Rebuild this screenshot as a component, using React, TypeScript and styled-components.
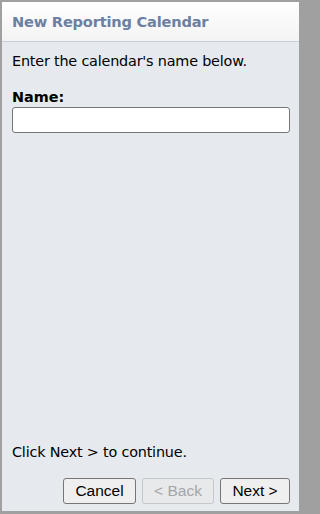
import React from 'react'
import styled, { createGlobalStyle } from 'styled-components'

const GlobalStyle = createGlobalStyle`
  html, body {
    margin: 0;
    padding: 0;
    background: #a0a0a0;
  }
  * {
    box-sizing: border-box;
  }
`

const StyledDialog = styled.div`
  width: 302px;
  height: 514px;
  display: flex;
  flex-direction: column;
  border-style: solid;
  border-color: #a0a0a0;
  border-width: 2px 3px 3px 2px;
  background: #e6eaee;
  font-family: 'DejaVu Sans', Tahoma, sans-serif;
  color: #000;
`

const StyledHeader = styled.div`
  height: 40px;
  display: flex;
  align-items: center;
  padding: 0 10px;
  background: linear-gradient(to bottom, #ffffff, #f3f3f3);
  border-bottom: 1px solid #c9cdd6;
`

const StyledTitle = styled.span`
  color: #6b80a3;
  font-size: 14.6px;
  font-weight: bold;
  letter-spacing: -0.2px;
`

const StyledBody = styled.div`
  flex: 1;
  display: flex;
  flex-direction: column;
  padding: 10px 10px 7px 10px;
`

const StyledText = styled.p`
  margin: 0;
  font-size: 14.4px;
  line-height: 18px;
  letter-spacing: -0.2px;
`

const StyledLabel = styled.label`
  display: block;
  margin-top: 19px;
  font-size: 14.4px;
  line-height: 17px;
  font-weight: bold;
`

const StyledInput = styled.input`
  display: block;
  width: 278px;
  height: 26px;
  margin-top: 1px;
  border: 1px solid #767676;
  border-radius: 3px;
  background: #fff;
  padding: 2px 4px;
  font: inherit;
  outline: none;
`

const StyledSpacer = styled.div`
  flex: 1;
`

const StyledButtonRow = styled.div`
  display: flex;
  justify-content: flex-end;
  gap: 6px;
  margin-top: 17px;
  margin-right: -1px;
`

const StyledButton = styled.button<{ $width: number }>`
  width: ${(props) => props.$width}px;
  height: 26px;
  padding: 0;
  border: 1px solid ${(props) => (props.disabled ? '#c5c7ca' : '#767676')};
  border-radius: 3px;
  background: ${(props) => (props.disabled ? '#e8e9ea' : '#efefef')};
  color: ${(props) => (props.disabled ? '#a3a5a8' : '#000')};
  font-family: 'Liberation Sans', Arial, sans-serif;
  font-size: 15.5px;
`

export default function App() {
  return (
    <>
      <GlobalStyle />
      <StyledDialog>
        <StyledHeader>
          <StyledTitle>New Reporting Calendar</StyledTitle>
        </StyledHeader>
        <StyledBody>
          <StyledText>Enter the calendar's name below.</StyledText>
          <StyledLabel htmlFor="calendar-name">Name:</StyledLabel>
          <StyledInput id="calendar-name" type="text" />
          <StyledSpacer />
          <StyledText>Click Next &gt; to continue.</StyledText>
          <StyledButtonRow>
            <StyledButton $width={73}>Cancel</StyledButton>
            <StyledButton $width={72} disabled>
              &lt; Back
            </StyledButton>
            <StyledButton $width={70}>Next &gt;</StyledButton>
          </StyledButtonRow>
        </StyledBody>
      </StyledDialog>
    </>
  )
}
